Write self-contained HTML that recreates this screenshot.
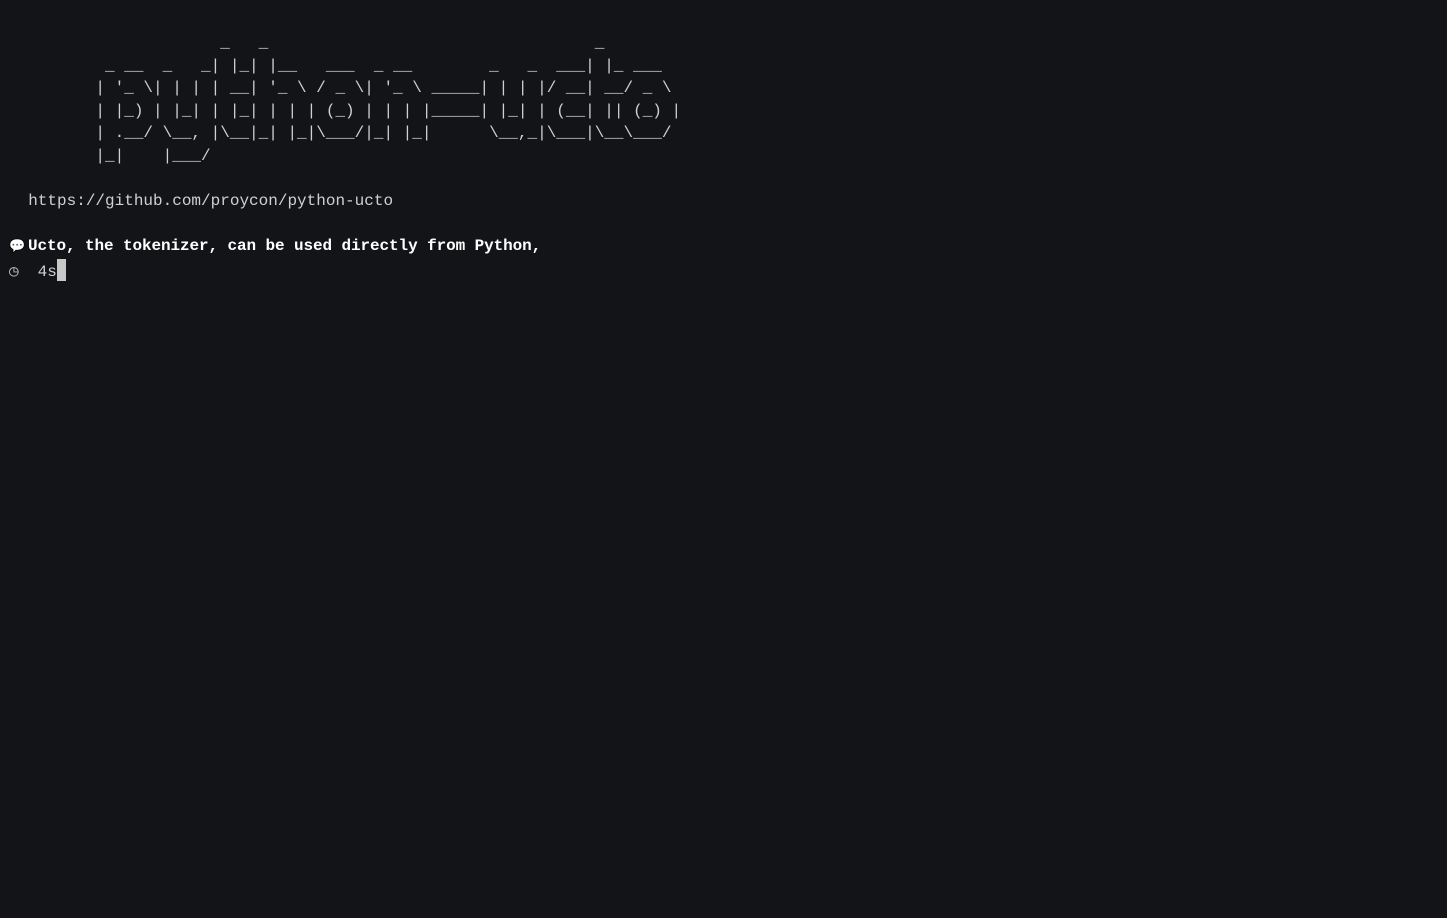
<!DOCTYPE html>
<html><head><meta charset="utf-8"><style>
html,body{margin:0;background:#131417;width:1447px;height:918px;overflow:hidden}
pre{position:absolute;left:9px;top:32px;margin:0;font-family:"Liberation Mono","DejaVu Sans Mono",monospace;font-size:16px;line-height:22.6px;color:#cfd0d2}
b{color:#fff;letter-spacing:-0.1px}
.ic{display:inline-block;width:19px;font-size:13px;color:#bbb}
.cur{display:inline-block;width:9px;height:22px;background:#c8c8c8;vertical-align:-5px}
</style></head><body>
<pre>                      _   _                                  _
          _ __  _   _| |_| |__   ___  _ __        _   _  ___| |_ ___
         | '_ \| | | | __| '_ \ / _ \| '_ \ _____| | | |/ __| __/ _ \
         | |_) | |_| | |_| | | | (_) | | | |_____| |_| | (__| || (_) |
         | .__/ \__, |\__|_| |_|\___/|_| |_|      \__,_|\___|\__\___/
         |_|    |___/

  https://github.com/proycon/python-ucto

<span class="ic">💬</span><b>Ucto, the tokenizer, can be used directly from Python,</b>
<span class="ic" style="font-size:16px">◷</span> 4s<span class="cur"></span></pre>
</body></html>
